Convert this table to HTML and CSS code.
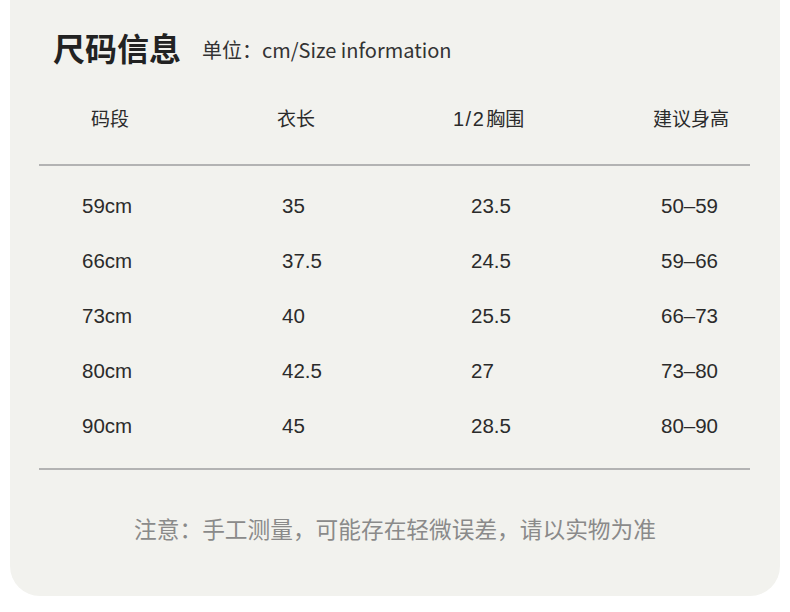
FILE: index.html
```html
<!DOCTYPE html>
<html lang="zh">
<head>
<meta charset="utf-8">
<link rel="stylesheet" href="styles.css">
</head>
<body>
<div class="card">
  <div class="title-row">
    <span class="title">尺码信息</span>
    <span class="subtitle">单位：cm/Size information</span>
  </div>
  <div class="thead">
    <span>码段</span><span>衣长</span><span><span class="frac">1/2</span>胸围</span><span>建议身高</span>
  </div>
  <div class="rule rule-top"></div>
  <div class="tbody">
    <div class="row"><span>59cm</span><span>35</span><span>23.5</span><span>50–59</span></div>
    <div class="row"><span>66cm</span><span>37.5</span><span>24.5</span><span>59–66</span></div>
    <div class="row"><span>73cm</span><span>40</span><span>25.5</span><span>66–73</span></div>
    <div class="row"><span>80cm</span><span>42.5</span><span>27</span><span>73–80</span></div>
    <div class="row"><span>90cm</span><span>45</span><span>28.5</span><span>80–90</span></div>
  </div>
  <div class="rule rule-bottom"></div>
  <div class="note">注意：手工测量，可能存在轻微误差，请以实物为准</div>
</div>
</body>
</html>
```
FILE: styles.css
```css
html, body {
  margin: 0;
  padding: 0;
  background: #ffffff;
}
body {
  font-family: "Noto Sans CJK SC", "Noto Sans", sans-serif;
  color: #2b2b2b;
}
.card {
  margin: 0 10px;
  height: 596px;
  background: #f2f2ee;
  border-radius: 0 0 30px 30px;
  overflow: hidden;
}
.title-row {
  display: flex;
  align-items: center;
  padding: 31px 0 0 43px;
  height: 32px;
}
.title {
  font-size: 32px;
  font-weight: 700;
  line-height: 32px;
  color: #222;
}
.subtitle {
  margin-left: 21px;
  margin-top: 6px;
  font-size: 20px;
  line-height: 24px;
  color: #333;
}
.thead {
  display: grid;
  grid-template-columns: 186px 176px 200px 1fr;
  padding-left: 81px;
  margin-top: 34px;
  height: 40px;
  align-items: center;
  font-family: "Liberation Sans", "Noto Sans CJK SC", sans-serif;
  font-size: 19px;
  color: #2b2b2b;
}
.frac {
  font-size: 20px;
  letter-spacing: 1.5px;
  margin-right: 1px;
}
.rule {
  height: 2px;
  background: #b3b3b3;
  margin: 0 30px 0 29px;
}
.rule-top {
  margin-top: 27px;
}
.tbody {
  margin-top: 12px;
}
.row {
  display: grid;
  grid-template-columns: 200px 189px 190px 1fr;
  padding-left: 72px;
  height: 55px;
  align-items: center;
  font-family: "Liberation Sans", Arial, sans-serif;
  font-size: 20.5px;
  color: #2b2b2b;
}
.rule-bottom {
  margin-top: 15px;
}
.note {
  margin-top: 44px;
  text-align: center;
  font-size: 22.7px;
  line-height: 30px;
  color: #8a8a8a;
}
```
